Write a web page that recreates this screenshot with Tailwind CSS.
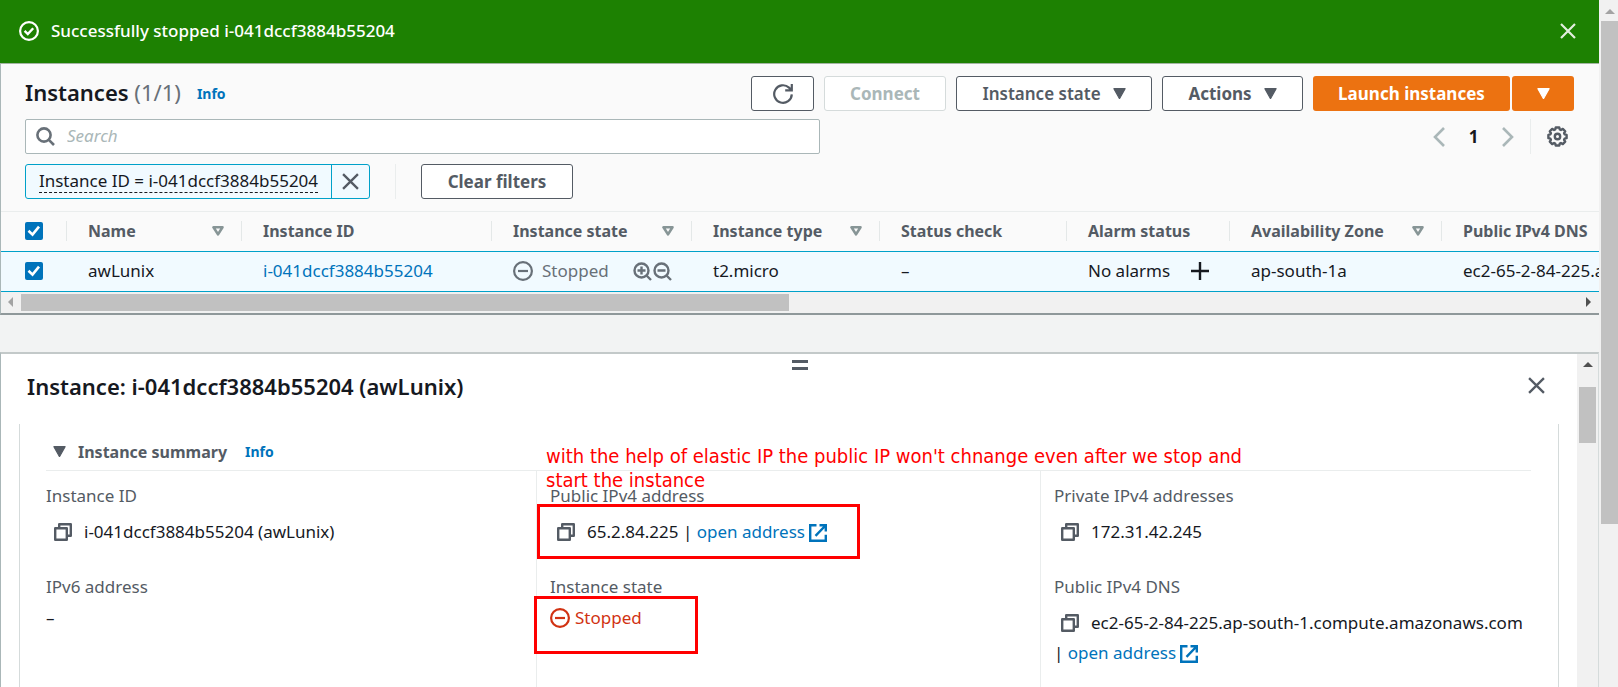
<!DOCTYPE html>
<html lang="en">
<head>
<meta charset="utf-8">
<title>Instances | EC2 Management Console</title>
<meta name="viewport" content="width=device-width, initial-scale=1">
<script src="https://cdn.jsdelivr.net/npm/@tailwindcss/browser@4"></script>
</head>
<body class="flex h-screen overflow-hidden bg-[#f2f3f3] font-['Noto_Sans',sans-serif] text-[17px] leading-6 text-[#16191f]">

<!-- Shared icons -->
<svg class="hidden">
  <symbol id="close" viewBox="0 0 16 16"><path d="M1 1l14 14M15 1L1 15" fill="none" stroke="currentColor" stroke-width="2.2"/></symbol>
  <symbol id="caret" viewBox="0 0 12 10"><path d="M.8.5h10.4L6 9.8z" fill="currentColor" stroke="currentColor" stroke-linejoin="round"/></symbol>
  <symbol id="sort" viewBox="0 0 12 10"><path d="M1.500 1.300h9L6 8.400z" fill="none" stroke="currentColor" stroke-width="2.600" stroke-linejoin="round"/></symbol>
  <symbol id="tick" viewBox="0 0 18 18"><path d="M3.5 8.8l4 3.8 6.5-8" fill="none" stroke="currentColor" stroke-width="2.6"/></symbol>
  <symbol id="copy" viewBox="0 0 18 18"><path d="M1.2 5.2h11.6v11.6H1.2zM5.2 5V1.2h11.6v11.6H13" fill="none" stroke="currentColor" stroke-width="2.4" stroke-linejoin="round"/></symbol>
  <symbol id="external" viewBox="0 0 18 18"><path d="M7.5 1.2H1.2v15.6h15.6v-6M10.5 1.2h6.3v6.3M16.5 1.5L6.5 11.8" fill="none" stroke="currentColor" stroke-width="2.4"/></symbol>
  <symbol id="stopped" viewBox="0 0 20 20"><circle cx="10" cy="10" r="8.9" fill="none" stroke="currentColor" stroke-width="2.2"/><path d="M5 10h10" stroke="currentColor" stroke-width="2.2"/></symbol>
</svg>

<div class="flex h-full min-w-0 flex-1 flex-col">
  <!-- Flash message -->
  <div class="flex h-[63px] shrink-0 items-center bg-[#1d8102] px-[19px] pb-px text-white" role="status">
    <svg class="mr-3 size-5" viewBox="0 0 20 20" fill="none" stroke="currentColor" stroke-width="2.2"><circle cx="10" cy="10" r="8.9"/><path d="M5.6 9.8l3.2 3.2 5.4-5.8" stroke-width="2.4"/></svg>
    <span class="flex-1 font-medium">Successfully stopped i-041dccf3884b55204</span>
    <button class="mr-1 grid size-4 place-items-center text-[#e3eedf]" aria-label="Dismiss"><svg class="size-4"><use href="#close"/></svg></button>
  </div>

  <!-- Instances list -->
  <section class="flex shrink-0 flex-col border-b-2 border-l border-t border-b-[#8f989a] border-l-[#aab7b8] border-t-[#a3b5a3] bg-[#fafafa]">
    <header class="flex items-start gap-[10px] pl-6 pr-[25px] pt-3">
      <h1 class="text-[22px] font-semibold leading-8">Instances <span class="font-normal text-[#687078]">(1/1)</span></h1>
      <a href="#" class="ml-[6px] pt-[6px] text-[14px] font-bold text-[#0073bb]">Info</a>
      <div class="ml-auto flex items-center gap-[10px] font-bold text-[#545b64]">
        <button class="grid h-[35px] w-[63px] place-items-center rounded-[3px] border border-[#545b64] bg-white" aria-label="Refresh">
          <svg class="size-5" viewBox="0 0 20 20" fill="none" stroke="currentColor" stroke-width="2.2"><path d="M18.800 10.400A8.800 8.800 0 1 1 16 3.600L18.500 6M18.800 0v6.400h-6.600"/></svg>
        </button>
        <button class="h-[35px] w-[122px] rounded-[3px] border border-[#d5dbdb] bg-white text-[#aab7b8]" disabled>Connect</button>
        <button class="flex h-[35px] w-[196px] items-center justify-center gap-3 rounded-[3px] border border-[#545b64] bg-white font-semibold">Instance state <svg class="h-[11px] w-[13px]"><use href="#caret"/></svg></button>
        <button class="flex h-[35px] w-[141px] items-center justify-center gap-3 rounded-[3px] border border-[#545b64] bg-white">Actions <svg class="h-[11px] w-[13px]"><use href="#caret"/></svg></button>
        <div class="flex gap-[2px] text-white">
          <button class="h-[35px] w-[197px] rounded-[3px] bg-[#ec7211]">Launch instances</button>
          <button class="grid h-[35px] w-[62px] place-items-center rounded-[3px] bg-[#ec7211]" aria-label="More launch options"><svg class="h-[11px] w-[13px]"><use href="#caret"/></svg></button>
        </div>
      </div>
    </header>

    <div class="flex items-center pl-6 pr-[31px] pt-2">
      <label class="flex h-[35px] w-full max-w-[795px] items-center rounded-[2px] border border-[#aab7b8] bg-white pb-px pl-[10px]">
        <svg class="mr-3 size-[19px] text-[#687078]" viewBox="0 0 19 19" fill="none" stroke="currentColor" stroke-width="2.6"><circle cx="8" cy="8" r="6.600"/><path d="M12.8 12.8l5.2 5.2"/></svg>
        <input type="search" placeholder="Search" aria-label="Search instances" class="min-w-0 flex-1 outline-none placeholder:italic placeholder:text-[#aab7b8]">
      </label>
      <nav class="ml-auto flex h-[35px] items-center text-[#aab7b8]" aria-label="Pagination">
        <button aria-label="Previous page"><svg class="h-5 w-3" viewBox="0 0 12 20" fill="none" stroke="currentColor" stroke-width="2.600"><path d="M11 1L2 10l9 9"/></svg></button>
        <button class="w-[57px] text-center font-bold text-[#16191f]">1</button>
        <button aria-label="Next page"><svg class="h-5 w-3" viewBox="0 0 12 20" fill="none" stroke="currentColor" stroke-width="2.600"><path d="M1 1l9 9-9 9"/></svg></button>
        <span class="mx-4 h-full w-px bg-[#eaeded]"></span>
        <button class="text-[#545b64]" aria-label="Preferences">
          <svg class="size-[21px]" viewBox="0 0 21 21" fill="none" stroke="currentColor" stroke-width="2.400"><path stroke-linejoin="round" d="M8.7 1.5h3.6l.5 2 1.1.5 1.9-1.1 2.4 2.4-1.1 1.9.5 1.1 2 .5v3.4l-2 .5-.5 1.1 1.1 1.9-2.4 2.4-1.9-1.1-1.1.5-.5 2H8.7l-.5-2-1.1-.5-1.9 1.1-2.4-2.4 1.1-1.9-.5-1.1-2-.5V8.8l2-.5.5-1.1-1.1-1.9 2.4-2.4L7.1 4l1.1-.5z"/><circle cx="10.5" cy="10.5" r="2.7"/></svg>
        </button>
      </nav>
    </div>

    <div class="flex items-center px-6 pb-3 pt-[10px]">
      <div class="flex h-[35px] w-[345px] rounded-[3px] border border-[#00a1c9] bg-[#f1faff]">
        <button class="flex flex-1 items-center justify-center whitespace-nowrap"><span class="border-b border-dashed border-[#16191f] leading-[22px]">Instance ID = i-041dccf3884b55204</span></button>
        <button class="grid w-[38px] place-items-center border-l border-[#00a1c9] text-[#545b64]" aria-label="Remove filter"><svg class="size-[17px]"><use href="#close"/></svg></button>
      </div>
      <span class="mx-[25px] h-[35px] w-px bg-[#eaeded]"></span>
      <button class="h-[35px] w-[152px] rounded-[3px] border border-[#545b64] bg-white font-bold text-[#545b64]">Clear filters</button>
    </div>

    <div class="overflow-hidden border-t border-[#eaeded]">
      <table class="w-[1800px] table-fixed border-collapse text-left whitespace-nowrap">
        <colgroup><col class="w-[65px]"><col class="w-[175px]"><col class="w-[250px]"><col class="w-[200px]"><col class="w-[188px]"><col class="w-[187px]"><col class="w-[163px]"><col class="w-[212px]"><col></colgroup>
        <thead class="text-[16px] text-[#545b64]">
          <tr class="h-[39px]">
            <th class="pl-6"><span class="relative block size-[18px]"><input type="checkbox" checked aria-label="Select all instances" class="block size-[18px] appearance-none rounded-[2px] bg-[#0073bb]"><svg class="pointer-events-none absolute inset-0 size-[18px] text-white"><use href="#tick"/></svg></span></th>
            <th><div class="flex h-5 items-center justify-between border-l border-[#e4e8e8] pl-[21px] pr-[17px]">Name <svg class="h-[10px] w-3 text-[#879596]"><use href="#sort"/></svg></div></th>
            <th><div class="flex h-5 items-center border-l border-[#e4e8e8] pl-[21px]">Instance ID</div></th>
            <th><div class="flex h-5 items-center justify-between border-l border-[#e4e8e8] pl-[21px] pr-[17px]">Instance state <svg class="h-[10px] w-3 text-[#879596]"><use href="#sort"/></svg></div></th>
            <th><div class="flex h-5 items-center justify-between border-l border-[#e4e8e8] pl-[21px] pr-[17px]">Instance type <svg class="h-[10px] w-3 text-[#879596]"><use href="#sort"/></svg></div></th>
            <th><div class="flex h-5 items-center border-l border-[#e4e8e8] pl-[21px]">Status check</div></th>
            <th><div class="flex h-5 items-center border-l border-[#e4e8e8] pl-[21px]">Alarm status</div></th>
            <th><div class="flex h-5 items-center justify-between border-l border-[#e4e8e8] pl-[21px] pr-[17px]">Availability Zone <svg class="h-[10px] w-3 text-[#879596]"><use href="#sort"/></svg></div></th>
            <th><div class="flex h-5 items-center border-l border-[#e4e8e8] pl-[21px]">Public IPv4 DNS</div></th>
          </tr>
        </thead>
        <tbody>
          <tr class="h-10 border-y border-[#00a1c9] bg-[#f1faff]">
            <td class="pl-6"><span class="relative block size-[18px]"><input type="checkbox" checked aria-label="Select awLunix" class="block size-[18px] appearance-none rounded-[2px] bg-[#0073bb]"><svg class="pointer-events-none absolute inset-0 size-[18px] text-white"><use href="#tick"/></svg></span></td>
            <td class="pl-[22px]">awLunix</td>
            <td class="pl-[22px]"><a href="#" class="text-[#0073bb]">i-041dccf3884b55204</a></td>
            <td class="pl-[22px]"><div class="flex items-center text-[#687078]"><svg class="mr-[9px] size-5"><use href="#stopped"/></svg>Stopped
              <button class="ml-auto" aria-label="Filter by value"><svg class="size-[19px]" viewBox="0 0 19 19" fill="none" stroke="currentColor" stroke-width="2.4"><circle cx="8.5" cy="8.5" r="7"/><path d="M13.5 13.5l4.5 4.5M4.500 8.500h8M8.500 4.500v8"/></svg></button>
              <button class="ml-px mr-[19px]" aria-label="Exclude value"><svg class="size-[19px]" viewBox="0 0 19 19" fill="none" stroke="currentColor" stroke-width="2.4"><circle cx="8.5" cy="8.5" r="7"/><path d="M13.5 13.5l4.5 4.5M4.500 8.500h8"/></svg></button></div></td>
            <td class="pl-[22px]">t2.micro</td>
            <td class="pl-[22px]">–</td>
            <td class="pl-[22px]"><div class="flex items-center justify-between pr-5">No alarms <button aria-label="Create alarm"><svg class="size-[18px]" viewBox="0 0 18 18"><path d="M0 9h18M9 0v18" stroke="currentColor" stroke-width="2.4"/></svg></button></div></td>
            <td class="pl-[22px]">ap-south-1a</td>
            <td class="pl-[22px]">ec2-65-2-84-225.ap-south-1.compute.amazonaws.com</td>
          </tr>
        </tbody>
      </table>
    </div>
    <!-- Horizontal scrollbar -->
    <div class="flex h-[21px] items-center bg-[#f1f1f1] pl-[7px] pr-2">
      <svg class="h-[10px] w-[5px] text-[#a3a3a3]" viewBox="0 0 5 10"><path d="M5 0v10L0 5z" fill="currentColor"/></svg>
      <div class="ml-2 h-[17px] w-[48.5%] bg-[#c1c1c1]"></div>
      <svg class="ml-auto h-[10px] w-[5px] text-[#505050]" viewBox="0 0 5 10"><path d="M0 0v10l5-5z" fill="currentColor"/></svg>
    </div>
  </section>

  <!-- Details split panel -->
  <section class="mt-[37px] flex min-h-0 flex-1 border-x border-t-2 border-l-[#aab7b8] border-r-[#d5dbdb] border-t-[#c3c9c9] bg-white">
    <div class="flex min-w-0 flex-1 flex-col">
      <button class="ml-[791px] mt-[6px] flex h-[10px] w-4 flex-col justify-between" aria-label="Resize panel"><span class="h-[3px] w-full bg-[#545b64]"></span><span class="h-[3px] w-full bg-[#545b64]"></span></button>
      <header class="flex items-center justify-between pl-[26px] pr-8">
        <h2 class="text-[22px] font-semibold leading-8">Instance: i-041dccf3884b55204 (awLunix)</h2>
        <button class="text-[#545b64]" aria-label="Close panel"><svg class="size-[17px]"><use href="#close"/></svg></button>
      </header>
      <div class="mx-[18px] mt-[22px] min-h-0 flex-1 border-x border-[#d5dbdb] pl-[26px] pr-[27px] pt-4">
        <div class="flex h-[31px] items-start border-b border-[#eaeded] pl-[7px]">
          <button class="flex items-center gap-3 text-[16px] font-bold text-[#545b64]"><svg class="h-[11px] w-[13px]"><use href="#caret"/></svg>Instance summary</button>
          <a href="#" class="ml-[18px] text-[14px] font-bold text-[#0073bb]">Info</a>
        </div>
        <div class="grid h-full grid-cols-[490fr_504fr_491fr]">
          <dl>
            <dt class="pt-[13px] text-[#545b64]">Instance ID</dt>
            <dd class="flex h-12 items-center gap-3 pl-2"><button class="text-[#545b64]" aria-label="Copy instance ID"><svg class="size-[18px]"><use href="#copy"/></svg></button>i-041dccf3884b55204 (awLunix)</dd>
            <dt class="pt-[19px] text-[#545b64]">IPv6 address</dt>
            <dd class="pt-[7px]">–</dd>
          </dl>
          <dl class="relative border-l border-[#eaeded] pl-[13px]">
            <dt class="pt-[13px] text-[#545b64]">Public IPv4 address</dt>
            <dd class="flex h-12 items-center gap-3 pl-[7px]"><button class="text-[#545b64]" aria-label="Copy public address"><svg class="size-[18px]"><use href="#copy"/></svg></button><span>65.2.84.225 | <a href="#" class="text-[#0073bb]">open address<svg class="ml-1 inline size-[18px]"><use href="#external"/></svg></a></span></dd>
            <dt class="pt-[19px] text-[#545b64]">Instance state</dt>
            <dd class="flex items-center gap-[5px] pt-[7px] text-[#d13212]"><svg class="size-5"><use href="#stopped"/></svg>Stopped</dd>
            <!-- Annotations -->
            <dd class="absolute -top-[27px] left-[9px] w-[720px] font-['DejaVu_Sans_Condensed','DejaVu_Sans',sans-serif] text-[20px] leading-6 text-[#ff0000]">with the help of elastic IP the public IP won't chnange even after we stop and<br>start the instance</dd>
            <dd class="pointer-events-none absolute left-0 top-[33px] h-[55px] w-[323px] border-[3px] border-[#ff0000]"></dd>
            <dd class="pointer-events-none absolute -left-[3px] top-[125px] h-[58px] w-[164px] border-[3px] border-[#ff0000]"></dd>
          </dl>
          <dl class="border-l border-[#eaeded] pl-[13px] whitespace-nowrap">
            <dt class="pt-[13px] text-[#545b64]">Private IPv4 addresses</dt>
            <dd class="flex h-12 items-center gap-3 pl-[7px]"><button class="text-[#545b64]" aria-label="Copy private address"><svg class="size-[18px]"><use href="#copy"/></svg></button>172.31.42.245</dd>
            <dt class="pt-[19px] text-[#545b64]">Public IPv4 DNS</dt>
            <dd class="pt-3"><span class="flex items-center gap-3 pl-[7px]"><button class="text-[#545b64]" aria-label="Copy public DNS"><svg class="size-[18px]"><use href="#copy"/></svg></button>ec2-65-2-84-225.ap-south-1.compute.amazonaws.com</span>
              <span class="block pt-[6px]">| <a href="#" class="text-[#0073bb]">open address<svg class="ml-1 inline size-[18px]"><use href="#external"/></svg></a></span></dd>
          </dl>
        </div>
      </div>
    </div>
    <!-- Panel scrollbar -->
    <div class="flex w-[21px] shrink-0 flex-col items-center bg-[#f1f1f1] pt-2">
      <svg class="h-[5px] w-[10px] text-[#505050]" viewBox="0 0 10 5"><path d="M0 5h10L5 0z" fill="currentColor"/></svg>
      <div class="mt-5 h-14 w-[17px] bg-[#c1c1c1]"></div>
    </div>
  </section>
</div>

<!-- Page scrollbar -->
<div class="flex w-[19px] shrink-0 flex-col items-center bg-[#f1f1f1] pl-[2px] pt-[9px]">
  <svg class="h-[5px] w-[10px] text-[#a3a3a3]" viewBox="0 0 10 5"><path d="M0 5h10L5 0z" fill="currentColor"/></svg>
  <div class="mt-[7px] h-[503px] w-full bg-[#c1c1c1]"></div>
</div>
</body>
</html>
